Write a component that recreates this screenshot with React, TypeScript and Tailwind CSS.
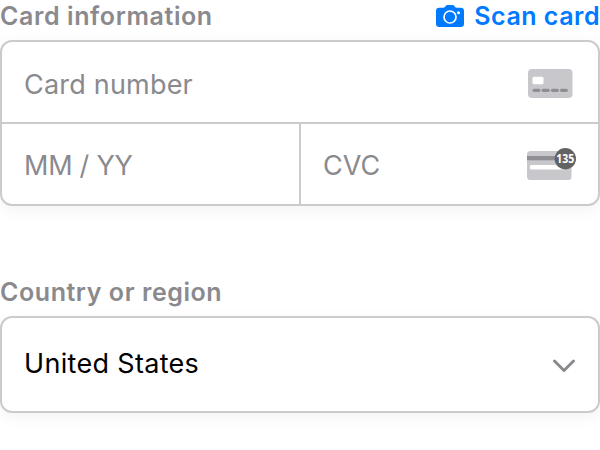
import React from "react";

function CameraIcon() {
  return (
    <svg width="28" height="22" viewBox="0 0 28 22" className="block shrink-0">
      <path
        d="M3.2 2.8h4.2c.7 0 1.1-.3 1.5-.8l.6-.8C10.1.4 10.7 0 11.7 0h4.6c1 0 1.6.4 2.2 1.2l.6.8c.4.5.8.8 1.5.8h4.2c2.1 0 3.2 1.1 3.2 3.2v12.8c0 2.1-1.1 3.2-3.2 3.2H3.2C1.1 22 0 20.9 0 18.8V6c0-2.1 1.1-3.2 3.2-3.2Z"
        fill="#007aff"
      />
      <circle cx="14" cy="12" r="6" fill="none" stroke="#fff" strokeWidth="1.7" />
      <circle cx="22.5" cy="7.7" r="1.5" fill="#fff" />
    </svg>
  );
}

function CardIcon() {
  return (
    <svg width="46" height="30" viewBox="0 0 46 30" className="block shrink-0">
      <rect x="1" y="0" width="44.5" height="29" rx="4" fill="#c7c7cc" />
      <rect x="5.5" y="7.8" width="11" height="7.5" rx="1.5" fill="#fff" />
      <g fill="#8e8e93">
        <rect x="5.5" y="19.7" width="8" height="3.2" rx="1.6" />
        <rect x="14.7" y="19.7" width="8" height="3.2" rx="1.6" />
        <rect x="23.9" y="19.7" width="8" height="3.2" rx="1.6" />
        <rect x="32.9" y="19.7" width="8" height="3.2" rx="1.6" />
      </g>
    </svg>
  );
}

function CvcIcon() {
  return (
    <svg width="50" height="34" viewBox="0 0 50 34" className="block shrink-0 overflow-visible">
      <rect x="1" y="3" width="44.5" height="29" rx="3.5" fill="#c7c7cc" />
      <rect x="1" y="8" width="44.5" height="4.3" fill="#8e8e93" />
      <rect x="4" y="17" width="36.5" height="4.5" rx="1.5" fill="#fff" />
      <circle cx="39.3" cy="10.7" r="10.7" fill="#636366" />
      <text
        x="39.3"
        y="15.2"
        textAnchor="middle"
        textLength="18"
        lengthAdjust="spacingAndGlyphs"
        fill="#fff"
        fontFamily="'Noto Sans', sans-serif"
        fontSize="12.5"
        fontWeight="700"
      >
        135
      </text>
    </svg>
  );
}

export default function App() {
  return (
    <main className="h-[450px] w-[600px] overflow-hidden bg-white font-['Inter',sans-serif] text-[27px] text-[#8a8a8e]">
      <header className="flex h-10 items-start justify-between text-[25px] leading-8 font-semibold">
        <h2 className="tracking-[0.6px]">Card information</h2>
        <button className="flex items-center gap-2.5 text-[#007aff]">
          <CameraIcon />
          <span className="tracking-[0.5px]">Scan card</span>
        </button>
      </header>
      <section className="h-[166px] rounded-xl border-2 border-[#cbcbcd] bg-white shadow-[0_4px_16px_rgba(0,0,0,0.05)]">
        <div className="flex h-[82px] items-center justify-between border-b-2 border-[#cbcbcd] pt-1 pr-[25px] pl-[22px]">
          <span className="pt-0.5 tracking-[0.2px]">Card number</span>
          <CardIcon />
        </div>
        <div className="flex h-20">
          <div className="flex w-[299px] items-center border-r-2 border-[#cbcbcd] pt-1 pl-[22px] tracking-[-0.25px]">MM / YY</div>
          <div className="flex flex-1 items-center justify-between pt-1 pr-[22px] pl-[22px]">
            <span>CVC</span>
            <div className="pb-0.5">
              <CvcIcon />
            </div>
          </div>
        </div>
      </section>
      <section className="pt-[70px]">
        <h2 className="h-10 text-[25px] leading-8 font-semibold tracking-[0.56px]">Country or region</h2>
        <button className="flex h-[97px] w-full items-center justify-between rounded-xl border-2 border-[#cbcbcd] bg-white px-[22px] text-black shadow-[0_4px_16px_rgba(0,0,0,0.05)]">
          <span className="tracking-[0.32px]">United States</span>
          <svg width="24" height="14" viewBox="0 0 24 14" fill="none" className="mt-0.5 block">
            <path d="m2.5 2 9.5 9.5L21.5 2" stroke="#8a8a8e" strokeWidth="3" strokeLinecap="round" strokeLinejoin="round" />
          </svg>
        </button>
      </section>
    </main>
  );
}
